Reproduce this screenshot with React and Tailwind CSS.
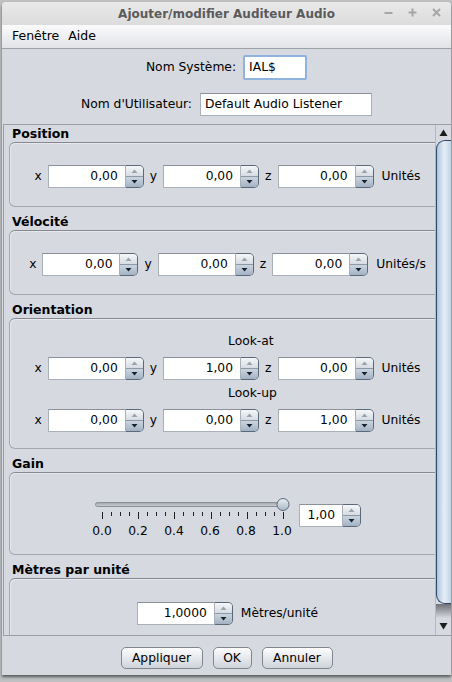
import React from 'react';

function Arrow({ up, color, big }) {
  const w = big ? 9 : 7;
  const h = big ? 7 : 4;
  return (
    <svg width={w} height={h} viewBox={`0 0 ${w} ${h}`}>
      <path
        d={up ? `M0.5 ${h} L${w / 2} 0.5 L${w - 0.5} ${h} Z` : `M0.5 0 L${w - 0.5} 0 L${w / 2} ${h - 0.5} Z`}
        fill={color}
      />
    </svg>
  );
}

function Spinner({ value, small }) {
  return (
    <div className="flex h-[23px]">
      <div
        className={`${small ? 'w-[44px]' : 'w-[78px]'} flex items-center justify-end border border-[#aab0b8] border-t-[#8c9199] bg-white pr-[7px]`}
      >
        {value}
      </div>
      <div className="flex w-[18px] flex-col overflow-hidden rounded-r-[5px] border border-l-0 border-[#5b6878]">
        <div className="flex flex-1 items-center justify-center bg-gradient-to-b from-[#f5f7f9] to-[#d6dce3]">
          <Arrow up color="#9aa2ac" />
        </div>
        <div className="flex flex-1 items-center justify-center border-t border-[#8d98a6] bg-gradient-to-b from-[#cbd5df] to-[#a2b2c4]">
          <Arrow color="#18222d" />
        </div>
      </div>
    </div>
  );
}

function Section({ title, className, children }) {
  return (
    <div className="mb-[6px]">
      <div className="h-[17px] pl-[8px] text-[12.5px] font-bold leading-[17px]">{title}</div>
      <div
        className={`ml-[5px] w-[437px] rounded-[6px] border border-[#a3a8af] border-t-[#858a92] shadow-[inset_1px_1px_0_#e6e8ec] ${className}`}
      >
        {children}
      </div>
    </div>
  );
}

function XyzRow({ values, unit }) {
  return (
    <div className="flex items-center justify-center gap-[6px]">
      <span>x</span>
      <Spinner value={values[0]} />
      <span>y</span>
      <Spinner value={values[1]} />
      <span>z</span>
      <Spinner value={values[2]} />
      <span className="ml-[2px]">{unit}</span>
    </div>
  );
}

function Slider() {
  const ticks = Array.from({ length: 21 }, (_, i) => i);
  return (
    <div className="w-[204px]">
      <svg width="204" height="24" viewBox="0 0 204 24">
        <defs>
          <linearGradient id="trk" x1="0" y1="0" x2="0" y2="1">
            <stop offset="0" stopColor="#9ea3aa" />
            <stop offset="1" stopColor="#d0d3d8" />
          </linearGradient>
          <linearGradient id="thm" x1="0" y1="0" x2="0" y2="1">
            <stop offset="0" stopColor="#e9eef3" />
            <stop offset="1" stopColor="#a9b7c6" />
          </linearGradient>
        </defs>
        <rect x="7.5" y="6.5" width="192" height="4" rx="2" fill="url(#trk)" stroke="#8a9098" />
        {ticks.map((i) => {
          const x = Math.round(14 + i * 9.05) + 0.5;
          return (
            <line key={i} x1={x} x2={x} y1="16" y2={i % 4 === 0 ? 23 : 20} stroke="#222" strokeWidth="1" />
          );
        })}
        <circle cx="195" cy="8.5" r="6" fill="url(#thm)" stroke="#5c6b7c" />
      </svg>
      <div className="ml-[-4px] mt-[4px] flex h-[14px] leading-[14px]">
        {['0.0', '0.2', '0.4', '0.6', '0.8', '1.0'].map((l) => (
          <span key={l} className="w-[36px] shrink-0 text-center">
            {l}
          </span>
        ))}
      </div>
    </div>
  );
}

function Scrollbar() {
  return (
    <div className="flex w-[16px] flex-col border-l border-[#b4b9c0] bg-[#d6d9df]">
      <div className="flex h-[15px] items-center justify-center pr-[1px]">
        <Arrow up big color="#1c1c1c" />
      </div>
      <div className="h-[464px] rounded-l-[9px] border border-r-0 border-[#2f4b6c] bg-gradient-to-r from-[#aec4db] via-[#e6eef7] to-[#c2d4e7]" />
      <div className="h-[14px] bg-gradient-to-b from-[#6e7278] to-[#d6d9df]" />
      <div className="flex flex-1 items-center justify-center pr-[1px]">
        <Arrow big color="#1c1c1c" />
      </div>
    </div>
  );
}

export default function App() {
  return (
    <div className="h-[682px] w-[452px] bg-[#bfc0c2] pl-[2px] pt-[2px] font-['DejaVu_Sans',sans-serif] text-[12.3px] text-black">
      <div className="flex h-[673px] w-[449px] flex-col overflow-hidden rounded-t-[4px] bg-[#d6d9df] shadow-[0_2px_3px_rgba(0,0,0,0.55)]">
        {/* title bar */}
        <div className="relative flex h-[23px] items-center justify-center bg-gradient-to-b from-[#e9e9e9] to-[#dcdcdc]">
          <span className="text-[12px] font-bold text-[#5b5b5b]">Ajouter/modifier Auditeur Audio</span>
          <div className="absolute right-[10px] top-[6px] flex items-center gap-[15px]">
            <svg width="9" height="9" viewBox="0 0 9 9">
              <path d="M0.5 5 H8.5" stroke="#a6a6a6" strokeWidth="2" />
            </svg>
            <svg width="9" height="9" viewBox="0 0 9 9">
              <path d="M0.5 4.5 H8.5 M4.5 0.5 V8.5" stroke="#a6a6a6" strokeWidth="2" />
            </svg>
            <svg width="9" height="9" viewBox="0 0 9 9">
              <path d="M1 1 L8 8 M8 1 L1 8" stroke="#a6a6a6" strokeWidth="2" />
            </svg>
          </div>
        </div>

        {/* menu bar */}
        <div className="flex h-[24px] items-center gap-[9px] border-b border-[#9da1a8] bg-gradient-to-b from-[#fbfbfc] to-[#e1e3e7] pl-[10px] text-[12.5px]">
          <span>Fenêtre</span>
          <span>Aide</span>
        </div>

        {/* names */}
        <div className="mt-[6px] flex h-[25px] items-center justify-center gap-[7px]">
          <span>Nom Système:</span>
          <div className="flex h-[25px] w-[64px] items-center rounded-[2px] border-2 border-[#8fb3dc] bg-white pl-[4px]">
            IAL$
          </div>
        </div>
        <div className="mt-[13px] flex h-[23px] items-center justify-center gap-[8px]">
          <span>Nom d'Utilisateur:</span>
          <div className="flex h-[23px] w-[172px] items-center border border-[#aab0b8] border-t-[#8c9199] bg-white pl-[4px]">
            Default Audio Listener
          </div>
        </div>

        {/* scroll pane */}
        <div className="ml-[1px] mt-[8px] flex h-[512px] border-y border-l border-[#9a9ea6]">
          <div className="w-[431px] overflow-hidden">
            <div className="w-[446px]">
              <Section title="Position" className="h-[65px] pt-[22px]">
                <XyzRow values={['0,00', '0,00', '0,00']} unit="Unités" />
              </Section>
              <Section title="Vélocité" className="h-[65px] pt-[22px]">
                <XyzRow values={['0,00', '0,00', '0,00']} unit="Unités/s" />
              </Section>
              <Section title="Orientation" className="h-[131px] pt-[15px]">
                <div className="h-[14px] pl-[218px] leading-[14px]">Look-at</div>
                <div className="mt-[9px]">
                  <XyzRow values={['0,00', '1,00', '0,00']} unit="Unités" />
                </div>
                <div className="mt-[6px] h-[14px] pl-[218px] leading-[14px]">Look-up</div>
                <div className="mt-[9px]">
                  <XyzRow values={['0,00', '0,00', '1,00']} unit="Unités" />
                </div>
              </Section>
              <Section title="Gain" className="h-[83px] pt-[23px]">
                <div className="flex items-start justify-center gap-[7px] pr-[6px]">
                  <Slider />
                  <div className="mt-[8px]">
                    <Spinner value="1,00" small />
                  </div>
                </div>
              </Section>
              <Section title="Mètres par unité" className="h-[70px] pt-[23px]">
                <div className="flex items-center justify-center gap-[8px]">
                  <Spinner value="1,0000" />
                  <span>Mètres/unité</span>
                </div>
              </Section>
            </div>
          </div>
          <Scrollbar />
        </div>

        {/* buttons */}
        <div className="mt-[11px] flex justify-center gap-[10px]">
          {[
            ['Appliquer', 'w-[82px]'],
            ['OK', 'w-[39px]'],
            ['Annuler', 'w-[71px]'],
          ].map(([label, w]) => (
            <div
              key={label}
              className={`${w} flex h-[22px] items-center justify-center rounded-[5px] border border-[#80868f] bg-gradient-to-b from-[#fdfdfe] to-[#cfd3da]`}
            >
              {label}
            </div>
          ))}
        </div>
      </div>
    </div>
  );
}
